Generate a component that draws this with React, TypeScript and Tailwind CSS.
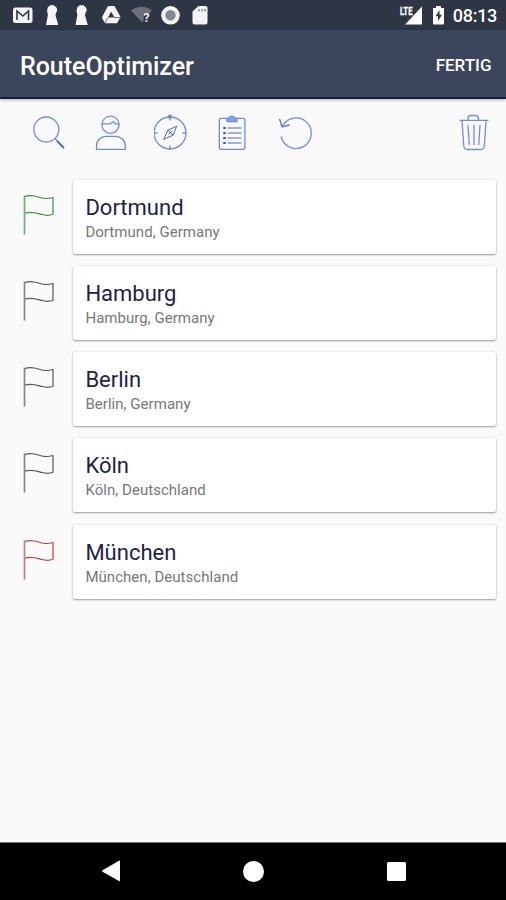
import type { ReactNode } from 'react';

interface Stop {
  name: string;
  address: string;
  flagClass: string;
}

const stops: Stop[] = [
  { name: 'Dortmund', address: 'Dortmund, Germany', flagClass: 'text-[#3f8a48]' },
  { name: 'Hamburg', address: 'Hamburg, Germany', flagClass: 'text-[#555555]' },
  { name: 'Berlin', address: 'Berlin, Germany', flagClass: 'text-[#555555]' },
  { name: 'Köln', address: 'Köln, Deutschland', flagClass: 'text-[#555555]' },
  { name: 'München', address: 'München, Deutschland', flagClass: 'text-[#bf4146]' },
];

function StatusBar() {
  return (
    <div className="flex h-[30px] shrink-0 items-center justify-between bg-[#2e3545] pl-3 pr-[9px] text-white">
      <svg width="198" height="30" viewBox="12 0 198 30" fill="#f4f5f6">
        {/* Mail */}
        <rect x="13" y="7.5" width="19.5" height="15.5" rx="2.5" />
        <path d="M17 20v-9l5.8 5 5.7-5v9" fill="none" stroke="#2e3545" strokeWidth="1.6" />
        {/* Keyholes */}
        <path d="M47.2 10a5 5 0 1 1 8.6 3.5l-.3 2 2.8 9.500H46l1.800-9.500-.1-2a5 5 0 0 1-.5-3.500z" />
        <path d="M76.700 10a5 5 0 1 1 8.600 3.500l-.3 2 2.800 9.500H75.500l1.800-9.500-.1-2a5 5 0 0 1-.5-3.500z" />
        {/* Drive */}
        <path d="M108 6h6.500l6 11-3.500 6.300h-12l-3.200-5.800z" />
        <path d="M111 12l-3 5.500h6z" fill="#2e3545" />
        <path d="M111 12l3.500 5.500h6M108 17.500l-3 5.500" fill="none" stroke="#2e3545" strokeWidth="0.7" />
        {/* Wifi */}
        <path d="M131 10.500q10.500-7.500 21 0l-2.700 3.300h-5.500v6.500l-1.500 2.200z" fill="#6b707b" />
        <text x="143.500" y="22" fontSize="12" fontWeight="700" fontFamily="Roboto, sans-serif">?</text>
        <circle cx="170.500" cy="15.300" r="9.300" />
        <circle cx="170.500" cy="15.300" r="5.200" fill="#858891" />
        {/* SD card */}
        <path d="M198.500 6h7a2 2 0 0 1 2 2v14.500a2 2 0 0 1-2 2h-11a2 2 0 0 1-2-2V11.500z" />
        <path d="M199 9v2.500M202 9v2.500M205 9v2.500" stroke="#6b707b" strokeWidth="1.200" />
      </svg>
      <div className="flex items-center">
        <svg width="48" height="30" viewBox="398 0 48 30" fill="#ffffff">
          <path d="M422 6.500V24.500H405z" />
          <path d="M398 4h15v11h-15z" fill="#2e3545" />
          <text x="400" y="14.500" fontSize="10.500" fontWeight="700" textLength="12.500" lengthAdjust="spacingAndGlyphs" fontFamily="Roboto, sans-serif" stroke="#ffffff" strokeWidth="0.300">LTE</text>
          <path d="M436 6h5v2h3v15.500a1 1 0 0 1-1 1h-9a1 1 0 0 1-1-1V8h3z" />
          <path d="M439.500 10l-4 6.300h2.500v4.700l4-6.300h-2.500z" fill="#2e3545" />
        </svg>
        <span className="ml-[7px] mt-[1px] text-[18px] leading-none font-medium tracking-[-0.3px]">08:13</span>
      </div>
    </div>
  );
}

function AppBar() {
  return (
    <header className="relative flex h-[69px] shrink-0 items-center justify-between border-b-2 border-[#151b4b] bg-[#3b455b] pl-5 pr-[14.500px] text-white shadow-[0_1px_3px_rgba(0,0,0,0.3)]">
      <h1 className="mt-[6px] text-[25px] leading-none font-medium tracking-[-0.03px]">RouteOptimizer</h1>
      <button className="mt-[4px] text-[17px] leading-none font-medium">FERTIG</button>
    </header>
  );
}

function ToolIcon({ label, viewBox, children }: { label: string; viewBox: string; children: ReactNode }) {
  return (
    <button aria-label={label}>
      <svg width="38" height="40" viewBox={viewBox} fill="none" stroke="#7189e6" strokeWidth="1.3" strokeLinecap="round" strokeLinejoin="round">
        {children}
      </svg>
    </button>
  );
}

function Toolbar() {
  return (
    <div className="flex h-[80px] shrink-0 items-start pl-[30px] pr-[13px] pt-[14px]">
      <div className="flex gap-[24px]">
        <ToolIcon label="Suchen" viewBox="30 113 38 40">
          <circle cx="46.300" cy="129.500" r="12.500" />
          <path d="M55.500 139l2 2" />
          <path d="M57.500 141.500l6 6" stroke="#3c69dc" strokeWidth="1.800" />
        </ToolIcon>
        <ToolIcon label="Kontakt" viewBox="92 113 38 40">
          <circle cx="110.500" cy="124.700" r="8.600" />
          <path d="M102.200 123.800h8l3.300-2.300 1.500 2.300h4M96.500 149.300h28.800v-3.500c0-5.500-4.500-9.500-9.800-9.500h-9.200c-5.300 0-9.800 4-9.800 9.500z" />
        </ToolIcon>
        <ToolIcon label="Navigation" viewBox="154 113 38 40">
          <circle cx="170" cy="133" r="16" />
          <circle cx="170" cy="116.700" r="1.500" fill="#7189e6" />
          <path d="M170 117v3M170 146v3M154 133h3M183 133h3" />
          <path d="M176.500 126.500l-3.300 8.500-9.500 4.500 4-9z M167.700 130.500l5.500 4.500M169 134l2.500-2.500" stroke="#4965d4" strokeWidth="1" />
        </ToolIcon>
        <ToolIcon label="Liste" viewBox="216 113 38 40">
          <rect x="219.300" y="118.300" width="25.600" height="31" rx="2" />
          <path d="M227 118.300h2.300a2.700 2.700 0 0 1 5.300 0h2.400v3.200h-10z" fill="#8fa3ed" />
          <path d="M224 128h1M224 133h1M224 138h1M224 143h1" stroke="#3454cf" strokeWidth="2" />
          <path d="M228 128h13M228 133h13M228 138h13M228 143h13" stroke="#8794dc" />
        </ToolIcon>
        <ToolIcon label="Rückgängig" viewBox="278 113 38 40">
          <path d="M282.500 126a15.300 15.300 0 1 1-1.300 11" />
          <path d="M279.700 119.500l2.300 7.300 7-1.800" stroke="#526dd9" />
        </ToolIcon>
      </div>
      <div className="ml-auto">
        <ToolIcon label="Löschen" viewBox="455 113 38 40">
          <path d="M460 120.300h28M468 120v-1.500q0-3 3-3h4.500q3 0 3 3v1.500M462 120.500l1.800 25.500q.3 3.500 3.500 3.500h13.500q3.200 0 3.500-3.500l1.800-25.500M468 125.500l1.200 19M474 125.500v19M480 125.500l-1.200 19" />
        </ToolIcon>
      </div>
    </div>
  );
}

function Flag({ className }: { className: string }) {
  return (
    <svg className={className} width="34" height="42" viewBox="22 194 34 42" fill="none" stroke="currentColor" strokeWidth="1.200" strokeLinejoin="round">
      <path d="M24.500 195.500v39" strokeWidth="1.700" strokeOpacity="0.700" />
      <path d="M25 196.500c7-2.300 12 .2 17 1.500 4.500 1 7 .7 11-.5v16.800c-4 1.500-7 1.300-11 .2-5-1.300-10-3.500-17-1.500" />
    </svg>
  );
}

function StopRow({ stop }: { stop: Stop }) {
  return (
    <li className="flex h-[74px] items-center pl-[22px] pr-[10.500px]">
      <Flag className={`mt-[-4px] mr-[17px] shrink-0 ${stop.flagClass}`} />
      <div className="flex h-full flex-1 flex-col rounded-[2px] bg-white pl-[12.400px] pt-[15px] shadow-[0_1px_2px_rgba(0,0,0,0.36),0_0_2px_rgba(0,0,0,0.12)]">
        <div className="text-[22px] leading-[26px] text-[#1e2249]">{stop.name}</div>
        <div className="mt-[2px] text-[15px] leading-[18px] tracking-[0.04px] text-[#777777]">{stop.address}</div>
      </div>
    </li>
  );
}

function NavigationBar() {
  return (
    <nav className="flex h-[58px] shrink-0 items-center justify-between border-t border-[#777777] bg-black pb-[1px] pl-[101px] pr-[100px]">
      <svg width="20" height="22" viewBox="0 0 20 22" fill="white">
        <path d="M1.500 10.300L18 .7q1-.5 1 .6v19.200q0 1.100-1 .5L1.500 11.800q-1-.7 0-1.500z" />
      </svg>
      <div className="mr-[1px] size-[21px] rounded-full bg-white" />
      <div className="size-[19px] rounded-[1.500px] bg-white" />
    </nav>
  );
}

export default function App() {
  return (
    <div className="flex h-[900px] w-[506px] flex-col overflow-hidden bg-[#fafafa] font-[Roboto,sans-serif]">
      <StatusBar />
      <AppBar />
      <Toolbar />
      <ul className="flex flex-1 flex-col gap-[12.200px] pt-[0.900px]">
        {stops.map((stop) => (
          <StopRow key={stop.name} stop={stop} />
        ))}
      </ul>
      <NavigationBar />
    </div>
  );
}
